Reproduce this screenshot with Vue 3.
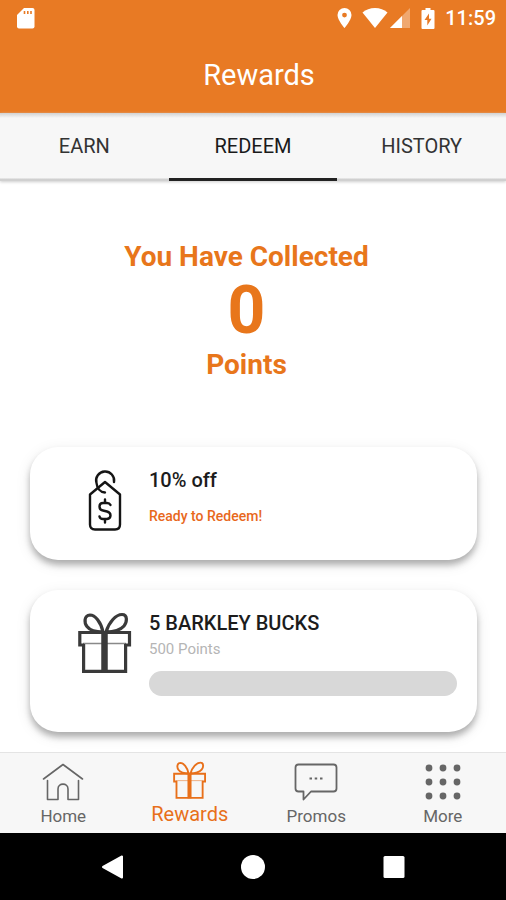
<script setup>
import { ref, h } from 'vue'

const tabs = ['Earn', 'Redeem', 'History']
const activeTab = ref('Redeem')

const rewards = [
  { id: 1, icon: 'tag', title: '10% off', ready: true },
  { id: 2, icon: 'gift', title: '5 BARKLEY BUCKS', points: 500, progress: 0 },
]

const links = [
  { id: 'home', label: 'Home' },
  { id: 'rewards', label: 'Rewards' },
  { id: 'promos', label: 'Promos' },
  { id: 'more', label: 'More' },
]
const activeLink = ref('rewards')

const dots = [4, 18, 32]

const GiftIcon = (props) =>
  h('svg', { viewBox: '0 0 54 61', fill: 'none', stroke: 'currentColor', 'stroke-width': props.weight, 'aria-hidden': 'true' }, [
    h('path', { d: 'M6 33H1.800V20.500H51.500V33H47' }),
    h('path', { d: 'M5.600 32V59.300H47.600V32' }),
    h('path', { d: 'M5 31.500H48', 'stroke-width': 1.4, opacity: 0.6 }),
    h('path', { d: 'M26.500 19V60', 'stroke-width': 6.5 }),
    h('path', { d: 'M25 20C23 10 17 3 12 3C6 3.500 6 10.500 9 14.500C12 18.500 18 20 25 20Z' }),
    h('path', { d: 'M28 20C31 10 38 2.500 44 2.500C50 2.500 49 10.500 46 14C42 18.500 36 20 28 20Z' }),
  ])
GiftIcon.props = ['weight']
</script>

<template>
  <div class="app">
    <header class="top">
      <div class="status">
        <svg class="sd" viewBox="0 0 18 21" aria-hidden="true">
          <path d="M7 0H15.500Q17.500 0 17.500 2V18.500Q17.500 20.500 15.500 20.500H2Q0 20.500 0 18.500V7Z" fill="#fff" />
          <path d="M7.500 3V6M10.800 3V6M14 3V6" stroke="#e87a24" stroke-width="1.600" />
        </svg>
        <div class="status-right">
          <svg class="pin" viewBox="0 0 15 20" aria-hidden="true">
            <path fill="#fff" fill-rule="evenodd" d="M7.500 0A7 7 0 0 0 .5 7C.5 12 7.500 20 7.500 20S14.500 12 14.500 7A7 7 0 0 0 7.500 0ZM7.500 4.700A2.400 2.400 0 1 1 7.500 9.500A2.400 2.400 0 1 1 7.500 4.700Z" />
          </svg>
          <svg class="wifi" viewBox="0 0 26 20" aria-hidden="true">
            <path fill="#fff" d="M13 20L.5 4.500C4 1.500 8 0 13 0S22 1.500 25.500 4.500Z" />
          </svg>
          <svg class="signal" viewBox="0 0 20 20" aria-hidden="true">
            <path fill="#fff" opacity=".35" d="M20 0V20H0Z" />
            <path fill="#fff" d="M12 8V20H0Z" />
          </svg>
          <svg class="battery" viewBox="0 0 14 21" aria-hidden="true">
            <path fill="#fff" d="M4.500 0H9.500V2H12.500Q13.500 2 13.500 3V20Q13.500 21 12.500 21H1.500Q.5 21 .5 20V3Q.5 2 1.500 2H4.500Z" />
            <path fill="#e87a24" d="M8 5.500L3.500 12H6.300V17.500L10.500 10.800H8Z" />
          </svg>
          <time class="clock">11:59</time>
        </div>
      </div>
      <h1 class="title">Rewards</h1>
    </header>

    <div class="tabs" role="tablist">
      <button
        v-for="tab in tabs"
        :key="tab"
        class="tab"
        :class="{ active: tab === activeTab }"
        role="tab"
        type="button"
        :aria-selected="tab === activeTab"
        @click="activeTab = tab"
      >{{ tab.toUpperCase() }}</button>
    </div>

    <main class="content">
      <section class="summary">
        <p class="line">You Have Collected</p>
        <p class="total">0</p>
        <p class="line">Points</p>
      </section>

      <ul class="cards">
        <li v-for="reward in rewards" :key="reward.id" class="card">
          <div class="card-icon">
            <GiftIcon v-if="reward.icon === 'gift'" class="gift-large" :weight="3.2" />
            <svg v-else class="tag" viewBox="0 0 34 62" fill="none" stroke="#151515" stroke-width="2.400" stroke-linecap="round" stroke-linejoin="round" aria-hidden="true">
              <path d="M17 13L32 25.500V55.500Q32 60.500 27 60.500H7Q2 60.500 2 55.500V25.500Z" />
              <path d="M26 13A9 9 0 1 0 8.500 14C9 19 12 23 17 23.500" />
              <path d="M22.500 36Q21.500 34 19 34H15Q11.500 34 11.500 37.500T15 41.500L19 42.500Q22.500 43.500 22.500 46.500T19 50H15Q12 50 11.500 47.500M17 30.500V34M17 50V53.500" />
            </svg>
          </div>
          <div class="card-body">
            <h2 class="card-title">{{ reward.title }}</h2>
            <p v-if="reward.ready" class="ready">Ready to Redeem!</p>
            <template v-else>
              <p class="points">{{ reward.points }} Points</p>
              <div class="bar" role="progressbar" aria-label="Progress" :aria-valuenow="reward.progress" aria-valuemin="0" aria-valuemax="100">
                <div class="fill" :style="{ width: reward.progress + '%' }"></div>
              </div>
            </template>
          </div>
        </li>
      </ul>
    </main>

    <nav class="nav">
      <a
        v-for="link in links"
        :key="link.id"
        class="link"
        :class="{ current: link.id === activeLink }"
        :href="'#' + link.id"
        @click="activeLink = link.id"
      >
        <svg v-if="link.id === 'home'" class="nav-icon" viewBox="0 0 42 38" fill="none" stroke="currentColor" stroke-width="1.600" stroke-linecap="round" stroke-linejoin="round" aria-hidden="true">
          <path d="M1.500 16L21 1.500L40.500 16" />
          <path d="M5.500 17.500V36.500H16V26C16 19.500 26 19.500 26 26V36.500H36.500V17.500" />
        </svg>
        <GiftIcon v-else-if="link.id === 'rewards'" class="nav-icon" :weight="3" />
        <svg v-else-if="link.id === 'promos'" class="nav-icon" viewBox="0 0 44 38" fill="none" stroke="currentColor" stroke-width="1.800" stroke-linejoin="round" aria-hidden="true">
          <path d="M4.500 1.500H39.500Q42.500 1.500 42.500 4.500V25.500Q42.500 28.500 39.500 28.500H17L9.500 36.500V28.500H4.500Q1.500 28.500 1.500 25.500V4.500Q1.500 1.500 4.500 1.500Z" />
          <path d="M15.500 15.500H18M20.700 15.500H23.200M26 15.500H28.500" stroke-width="2.200" />
        </svg>
        <svg v-else class="nav-icon" viewBox="0 0 36 38" fill="currentColor" aria-hidden="true">
          <template v-for="y in dots" :key="y">
            <circle v-for="x in dots" :key="x" :cx="x" :cy="y + 1" r="3.400" />
          </template>
        </svg>
        <span class="nav-label">{{ link.label }}</span>
      </a>
    </nav>

    <div class="system">
      <button class="key" type="button" aria-label="Back">
        <svg viewBox="0 0 24 24" aria-hidden="true"><path fill="#fff" stroke="#fff" stroke-width="2" stroke-linejoin="round" d="M22 1.500V22.500L3 12Z" /></svg>
      </button>
      <button class="key" type="button" aria-label="Home screen">
        <svg viewBox="0 0 24 24" aria-hidden="true"><circle cx="12" cy="12" r="12" fill="#fff" /></svg>
      </button>
      <button class="key" type="button" aria-label="Recent apps">
        <svg viewBox="0 0 24 24" aria-hidden="true"><rect x="1.500" y="1" width="21" height="22" rx="1.500" fill="#fff" /></svg>
      </button>
    </div>
  </div>
</template>

<style>
body {
  margin: 0;
  background: #fff;
}
</style>

<style scoped>
.app {
  display: flex;
  flex-direction: column;
  min-height: 100vh;
  font-family: Roboto, "Liberation Sans", sans-serif;
  color: #1c1c1c;
}
h1, h2, p, ul {
  margin: 0;
  padding: 0;
}
button {
  border: 0;
  background: none;
  font: inherit;
  color: inherit;
}
svg {
  display: block;
}
.top {
  background: #e87a24;
  color: #fff;
  height: 113px;
}
.status {
  display: flex;
  justify-content: space-between;
  align-items: center;
  height: 36px;
  padding: 0 10px 0 17px;
}
.status-right {
  display: flex;
  align-items: center;
}
.sd {
  width: 18px;
  height: 21px;
}
.pin {
  width: 15px;
  height: 20px;
  margin-right: 10px;
}
.wifi {
  width: 26px;
  height: 20px;
  margin-right: 2px;
}
.signal {
  width: 20px;
  height: 20px;
  margin-right: 11px;
}
.battery {
  width: 14px;
  height: 21px;
  margin-right: 10px;
}
.clock {
  font-size: 20px;
  font-weight: 500;
  line-height: 36px;
}
.title {
  font-size: 29px;
  font-weight: 400;
  line-height: 36px;
  padding: 21px 0 0 12px;
  text-align: center;
}
.tabs {
  display: flex;
  height: 68px;
  background: linear-gradient(#d2d2d2, #f7f7f7 5px, #f7f7f7 65px, #d0d0d0 66px);
  box-shadow: 0 1px 3px #ccc;
}
.tab {
  flex: 1;
  padding: 0;
  border-bottom: 3px solid transparent;
  font-size: 20px;
  color: #333;
  cursor: pointer;
}
.tab.active {
  border-bottom-color: #222;
  color: #1a1a1a;
}
.content {
  flex: 1;
  padding: 58px 29px 20px 30px;
}
.summary {
  padding-right: 14px;
  text-align: center;
  color: #e8761b;
}
.line {
  font-size: 28px;
  font-weight: 700;
  line-height: 36px;
}
.total {
  font-size: 66px;
  font-weight: 700;
  line-height: 72px;
}
.cards {
  display: grid;
  gap: 30px;
  margin-top: 64px;
  list-style: none;
}
.card {
  display: flex;
  padding: 21px 20px 29px 40px;
  border-radius: 28px;
  background: #fff;
  box-shadow: 0 5px 6px rgba(0, 0, 0, 0.27), 0 4px 16px rgba(0, 0, 0, 0.09);
}
.card-icon {
  display: flex;
  justify-content: center;
  align-items: flex-start;
  width: 69px;
  margin-right: 10px;
  padding-top: 1px;
}
.tag {
  width: 34px;
  height: 62px;
}
.gift-large {
  width: 54px;
  height: 61px;
  color: #3a3a3a;
}
.card-body {
  flex: 1;
}
.card-title {
  font-size: 20px;
  font-weight: 500;
  line-height: 24px;
}
.ready {
  margin-top: 14px;
  font-size: 14px;
  font-weight: 500;
  line-height: 20px;
  color: #e8681c;
}
.points {
  margin-top: 4px;
  font-size: 15px;
  line-height: 20px;
  color: #b5b5b5;
}
.bar {
  height: 25px;
  margin: 12px 0 7px;
  border-radius: 13px;
  background: #d8d8d8;
  overflow: hidden;
}
.fill {
  height: 100%;
  background: #e87a24;
}
.nav {
  display: flex;
  position: relative;
  height: 80px;
  border-top: 1px solid #e4e4e4;
  background: #f7f7f7;
}
.link {
  display: flex;
  flex: 1;
  flex-direction: column;
  align-items: center;
  padding-top: 10px;
  color: #666;
  font-size: 17px;
  line-height: 24px;
  text-decoration: none;
}
.link.current {
  padding-top: 8px;
  color: #e8701a;
  font-size: 20px;
}
.nav-icon {
  height: 38px;
  margin-bottom: 3px;
}
.system {
  display: flex;
  justify-content: center;
  gap: 117px;
  height: 67px;
  background: #000;
}
.key {
  display: flex;
  align-items: center;
  padding: 0;
}
.key svg {
  width: 24px;
  height: 24px;
}
</style>
